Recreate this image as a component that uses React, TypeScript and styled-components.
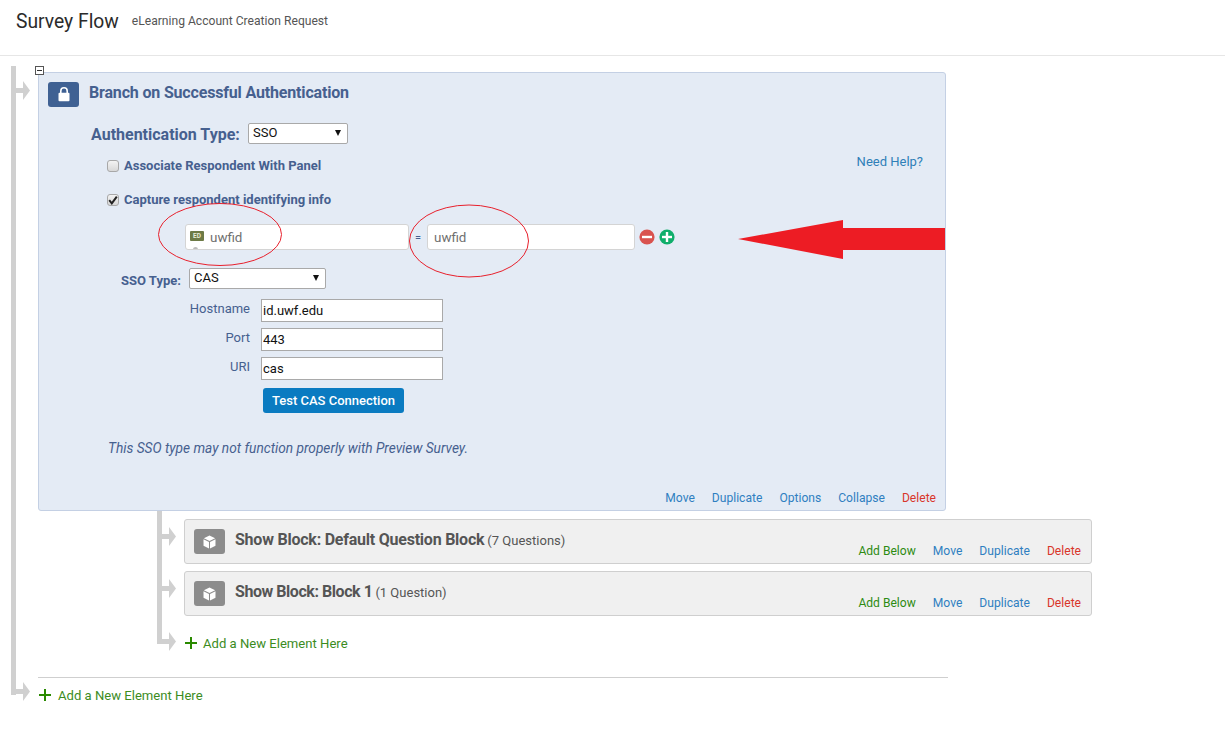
import React from "react";
import styled, { createGlobalStyle } from "styled-components";

const GlobalStyle = createGlobalStyle`
  html, body {
    margin: 0;
    background: #fff;
    font-family: Roboto, "Liberation Sans", sans-serif;
    color: #333;
  }
  * { box-sizing: border-box; }
`;

const navy = "#46608f";

//header
const Header = styled.header`
  height: 56px;
  border-bottom: 1px solid #e6e6e6;
  display: flex;
  align-items: flex-start;
  padding: 10px 0 0 16px;
`;
const PageTitle = styled.h1`
  margin: 0;
  font-size: 19.3px;
  font-weight: 400;
  color: #2b2b2b;
`;
const SurveyName = styled.span`
  margin: 4px 0 0 13px;
  font-size: 12.1px;
  color: #555;
`;

//tree
const Tree = styled.div`
  position: relative;
  display: flow-root;
  margin: 10px 0 0 11px;
  padding: 6px 0 0 27px;
  &::before {
    content: "";
    position: absolute;
    left: 0;
    top: 0;
    bottom: 9px;
    width: 5px;
    background: #d0d0d0;
  }
`;
const InnerTree = styled.div`
  position: relative;
  margin-left: 119px;
  padding: 8px 0 0 27px;
  &::before {
    content: "";
    position: absolute;
    left: 0;
    top: 0;
    bottom: 8px;
    width: 5px;
    background: #d0d0d0;
  }
`;
const Node = styled.div`
  position: relative;
`;
const ConnectorSvg = styled.svg<{ $top: number }>`
  position: absolute;
  left: -22px;
  top: ${(p) => p.$top}px;
`;
const Connector = ({ top }: { top: number }) => (
  <ConnectorSvg $top={top} width="14" height="19" viewBox="0 0 14 19">
    <path d="M0 7H7V0L14 9.5L7 19V12H0Z" fill="#d0d0d0" />
  </ConnectorSvg>
);
const Collapse = styled.span`
  position: absolute;
  left: -3px;
  top: -6px;
  width: 9px;
  height: 9px;
  border: 1px solid #555;
  background: #fff;
  z-index: 2;
  &::after {
    content: "";
    position: absolute;
    left: 1px;
    right: 1px;
    top: 3px;
    height: 1px;
    background: #333;
  }
`;

//branch card
const BranchCard = styled.section`
  position: relative;
  width: 908px;
  height: 439px;
  display: flex;
  flex-direction: column;
  background: #e4ebf5;
  border: 1px solid #c4d0e4;
  border-radius: 3px;
`;
const BranchHead = styled.div`
  display: flex;
  align-items: center;
  padding: 9px 0 0 9px;
`;
const IconTile = styled.span<{ $color: string }>`
  flex: none;
  width: 31px;
  height: 25px;
  display: flex;
  align-items: center;
  justify-content: center;
  border-radius: 3px;
  background: ${(p) => p.$color};
`;
const BranchTitle = styled.h2`
  margin: 0 0 4px 10px;
  font-size: 16px;
  font-weight: 700;
  letter-spacing: -0.17px;
  color: ${navy};
`;
const AuthRow = styled.div`
  display: flex;
  align-items: center;
  margin-top: 16px;
  padding-left: 52px;
`;
const AuthLabel = styled.label`
  width: 157px;
  padding-top: 2px;
  font-size: 16px;
  font-weight: 700;
  color: ${navy};
`;
const SelectWrap = styled.span<{ $width: number }>`
  position: relative;
  display: block;
  width: ${(p) => p.$width}px;
  height: 21px;
  &::after {
    content: "";
    position: absolute;
    right: 7px;
    top: 7px;
    border-left: 3px solid transparent;
    border-right: 3px solid transparent;
    border-top: 6px solid #111;
  }
`;
const NativeSelect = styled.select`
  appearance: none;
  display: block;
  width: 100%;
  height: 100%;
  padding: 0 0 3px 4px;
  background: #fff;
  border: 1px solid #a9a9a9;
  border-radius: 2px;
  font: 13px Roboto, "Liberation Sans", sans-serif;
  color: #111;
`;
const CheckRow = styled.div<{ $gap: number }>`
  display: flex;
  align-items: center;
  gap: 5px;
  height: 16px;
  margin-top: ${(p) => p.$gap}px;
  padding: 0 22px 0 68px;
`;
const CheckBox = styled.span`
  width: 12px;
  height: 12px;
  display: flex;
  align-items: center;
  justify-content: center;
  border: 1px solid #a8a8a8;
  border-radius: 3px;
  background: linear-gradient(#f3f3f3, #d8d8d8);
`;
const CheckLabel = styled.span`
  padding-bottom: 2px;
  font-size: 13px;
  font-weight: 700;
  color: ${navy};
`;
const HelpLink = styled.a`
  margin: 0 0 10px auto;
  font-size: 13px;
  color: #2f7fb8;
`;
const PipeRow = styled.div`
  display: flex;
  align-items: center;
  height: 26px;
  margin-top: 16px;
  padding-left: 146px;
`;
const PipeField = styled.div<{ $width: number; $pad: number }>`
  position: relative;
  width: ${(p) => p.$width}px;
  height: 26px;
  display: flex;
  align-items: center;
  gap: 6px;
  padding: 0 0 0 ${(p) => p.$pad}px;
  overflow: hidden;
  background: #fff;
  border: 1px solid #d4d4d4;
  border-radius: 3px;
  font-size: 13.4px;
  color: #6f6f6f;
`;
const EdBadge = styled.span`
  width: 14px;
  height: 10px;
  margin-bottom: 2px;
  border-radius: 1px;
  background: #6d7a46;
  color: #e8ecd8;
  font-size: 6.5px;
  font-weight: 700;
  line-height: 10px;
  text-align: center;
`;
const HiddenDot = styled.span`
  position: absolute;
  left: 7px;
  bottom: -3px;
  width: 5px;
  height: 5px;
  border-radius: 50%;
  background: #bbb;
`;
const Equals = styled.span`
  width: 18px;
  text-align: center;
  font-size: 11px;
  color: ${navy};
`;
const RoundIcons = styled.span`
  display: flex;
  gap: 4px;
  margin-left: 4px;
`;
const SsoRow = styled.div`
  display: flex;
  align-items: center;
  margin-top: 18px;
  padding-left: 82px;
`;
const SsoLabel = styled.label`
  width: 68px;
  padding-top: 3px;
  font-size: 13px;
  font-weight: 700;
  color: ${navy};
`;
const ConfigGrid = styled.div`
  display: grid;
  grid-template-columns: 61px 182px;
  column-gap: 11px;
  row-gap: 6px;
  margin-top: 10px;
  padding-left: 150px;
`;
const ConfigLabel = styled.label`
  padding-top: 2px;
  text-align: right;
  font-size: 13px;
  color: ${navy};
`;
const ConfigInput = styled.input`
  width: 182px;
  height: 23px;
  padding: 0 1px 1px;
  background: #fff;
  border: 1px solid #a9a9a9;
  font: 13px Roboto, "Liberation Sans", sans-serif;
  color: #111;
`;
const TestButton = styled.button`
  width: 141px;
  height: 25px;
  margin: 8px 0 0 224px;
  padding: 0;
  border: 0;
  border-radius: 3px;
  background: #0a7bc1;
  color: #fff;
  font: 500 13px Roboto, "Liberation Sans", sans-serif;
`;
const Note = styled.p`
  margin: 27px 0 0;
  padding-left: 69px;
  font-size: 13.7px;
  font-style: italic;
  color: ${navy};
`;
const Actions = styled.div<{ $gap: number }>`
  display: flex;
  justify-content: flex-end;
  gap: ${(p) => p.$gap}px;
  font-size: 12.1px;
`;
const CardFooter = styled(Actions)`
  margin-top: auto;
  padding: 0 9px 5px 0;
`;
const ActionLink = styled.a<{ $color?: string }>`
  color: ${(p) => p.$color ?? "#2f7fc1"};
`;

//annotation drawn over the card
const Markup = styled.svg`
  position: absolute;
  left: 0;
  top: 0;
  pointer-events: none;
`;

//blocks
const BlockCard = styled.div<{ $gap: number }>`
  position: relative;
  width: 908px;
  height: 45px;
  margin-top: ${(p) => p.$gap}px;
  display: flex;
  padding: 9px 0 0 9px;
  background: #f0f0f0;
  border: 1px solid #cfcfcf;
  border-radius: 3px;
`;
const BlockTitle = styled.div<{ $spacing: number }>`
  margin-left: 10px;
  padding-top: 1px;
  font-size: 16px;
  font-weight: 700;
  letter-spacing: ${(p) => p.$spacing}px;
  color: #555;
  white-space: nowrap;
`;
const BlockCount = styled.span`
  margin-left: 3px;
  font-size: 13px;
  font-weight: 400;
  letter-spacing: 0;
`;
const BlockActions = styled(Actions)`
  position: absolute;
  right: 10px;
  bottom: 5px;
`;
const AddRow = styled.div<{ $gap: number; $space: number }>`
  position: relative;
  display: flex;
  align-items: center;
  gap: ${(p) => p.$space}px;
  height: 18px;
  margin-top: ${(p) => p.$gap}px;
  margin-left: 1px;
  font-size: 13.1px;
  color: #3c8c1e;
`;
const Rule = styled.hr`
  width: 910px;
  height: 1px;
  margin: 25px 0 0;
  border: 0;
  background: #cfcfcf;
`;

const green = "#2e8b12";
const red = "#d9362b";

const LockIcon = () => (
  <svg width="12" height="15" viewBox="0 0 12 15">
    <path d="M2.8 6V4a3.2 3.2 0 0 1 6.4 0V6" fill="none" stroke="#fff" strokeWidth="1.6" />
    <rect x="0.5" y="5.8" width="11" height="8.4" rx="1" fill="#fff" />
  </svg>
);

const CubeIcon = () => (
  <svg width="13" height="14" viewBox="0 0 15 16">
    <path d="M7.5 0.5L14 3.7L7.5 6.9L1 3.7Z" fill="#fff" />
    <path d="M0.6 4.8L6.9 8V15.6L0.6 12.3Z" fill="#fff" />
    <path d="M14.4 4.8L8.1 8V15.6L14.4 12.3Z" fill="#fff" />
  </svg>
);

const PlusIcon = () => (
  <svg width="12" height="12" viewBox="0 0 12 12">
    <path d="M5 0H7V5H12V7H7V12H5V7H0V5H5Z" fill="#2a8a00" />
  </svg>
);

const RoundButton = ({ color, plus }: { color: string; plus?: boolean }) => (
  <svg width="16" height="16" viewBox="0 0 16 16">
    <circle cx="8" cy="8" r="7.6" fill={color} />
    <rect x="3" y="6.8" width="10" height="2.4" fill="#fff" />
    {plus && <rect x="6.8" y="3" width="2.4" height="10" fill="#fff" />}
  </svg>
);

const Check = () => (
  <svg width="10" height="10" viewBox="0 0 10 10">
    <path d="M1.2 5.2L3.8 8.4L8.8 1.6" fill="none" stroke="#222" strokeWidth="2" />
  </svg>
);

const config = [
  { label: "Hostname", value: "id.uwf.edu" },
  { label: "Port", value: "443" },
  { label: "URI", value: "cas" },
];

const blocks = [
  { name: "Show Block: Default Question Block", count: "(7 Questions)", spacing: -0.23 },
  { name: "Show Block: Block 1", count: "(1 Question)", spacing: -0.45 },
];

export default function App() {
  return (
    <>
      <GlobalStyle />
      <Header>
        <PageTitle>Survey Flow</PageTitle>
        <SurveyName>eLearning Account Creation Request</SurveyName>
      </Header>

      <Tree>
        <Node>
          <Collapse />
          <Connector top={9} />
          <BranchCard>
            <BranchHead>
              <IconTile $color="#3f6193">
                <LockIcon />
              </IconTile>
              <BranchTitle>Branch on Successful Authentication</BranchTitle>
            </BranchHead>

            <AuthRow>
              <AuthLabel>Authentication Type:</AuthLabel>
              <SelectWrap $width={100}>
                <NativeSelect defaultValue="SSO">
                  <option>SSO</option>
                </NativeSelect>
              </SelectWrap>
            </AuthRow>

            <CheckRow $gap={14}>
              <CheckBox />
              <CheckLabel>Associate Respondent With Panel</CheckLabel>
              <HelpLink>Need Help?</HelpLink>
            </CheckRow>
            <CheckRow $gap={18}>
              <CheckBox>
                <Check />
              </CheckBox>
              <CheckLabel>Capture respondent identifying info</CheckLabel>
            </CheckRow>

            <PipeRow>
              <PipeField $width={224} $pad={4}>
                <EdBadge>ED</EdBadge>
                uwfid
                <HiddenDot />
              </PipeField>
              <Equals>=</Equals>
              <PipeField $width={208} $pad={6}>uwfid</PipeField>
              <RoundIcons>
                <RoundButton color="#d9534f" />
                <RoundButton color="#0fae6b" plus />
              </RoundIcons>
            </PipeRow>

            <SsoRow>
              <SsoLabel>SSO Type:</SsoLabel>
              <SelectWrap $width={137}>
                <NativeSelect defaultValue="CAS">
                  <option>CAS</option>
                </NativeSelect>
              </SelectWrap>
            </SsoRow>

            <ConfigGrid>
              {config.map((row) => (
                <React.Fragment key={row.label}>
                  <ConfigLabel>{row.label}</ConfigLabel>
                  <ConfigInput defaultValue={row.value} />
                </React.Fragment>
              ))}
            </ConfigGrid>
            <TestButton>Test CAS Connection</TestButton>
            <Note>This SSO type may not function properly with Preview Survey.</Note>

            <CardFooter $gap={17}>
              <ActionLink>Move</ActionLink>
              <ActionLink>Duplicate</ActionLink>
              <ActionLink>Options</ActionLink>
              <ActionLink>Collapse</ActionLink>
              <ActionLink $color={red}>Delete</ActionLink>
            </CardFooter>

            {/* hand drawn annotation, coords relative to the card */}
            <Markup width="907" height="437" viewBox="0 0 907 437">
              <ellipse cx="181" cy="161.5" rx="61.5" ry="31" fill="none" stroke="#e8202c" />
              <ellipse cx="430" cy="168" rx="59.5" ry="36" fill="none" stroke="#e8202c" />
              <path d="M699 166L804 147V155H906V177H804V186Z" fill="#ed1c24" />
            </Markup>
          </BranchCard>
        </Node>

        <InnerTree>
          {blocks.map((block, i) => (
            <Node key={block.name}>
              <Connector top={8} />
              <BlockCard $gap={i === 0 ? 0 : 7}>
                <IconTile $color="#8c8c8c">
                  <CubeIcon />
                </IconTile>
                <BlockTitle $spacing={block.spacing}>
                  {block.name}
                  <BlockCount>{block.count}</BlockCount>
                </BlockTitle>
                <BlockActions $gap={17}>
                  <ActionLink $color={green}>Add Below</ActionLink>
                  <ActionLink>Move</ActionLink>
                  <ActionLink>Duplicate</ActionLink>
                  <ActionLink $color={red}>Delete</ActionLink>
                </BlockActions>
              </BlockCard>
            </Node>
          ))}
          <Node>
            <Connector top={-2} />
            <AddRow $gap={18} $space={6}>
              <PlusIcon />
              Add a New Element Here
            </AddRow>
          </Node>
        </InnerTree>

        <Rule />
        <Node>
          <Connector top={-4} />
          <AddRow $gap={8} $space={7}>
            <PlusIcon />
            Add a New Element Here
          </AddRow>
        </Node>
      </Tree>
    </>
  );
}
